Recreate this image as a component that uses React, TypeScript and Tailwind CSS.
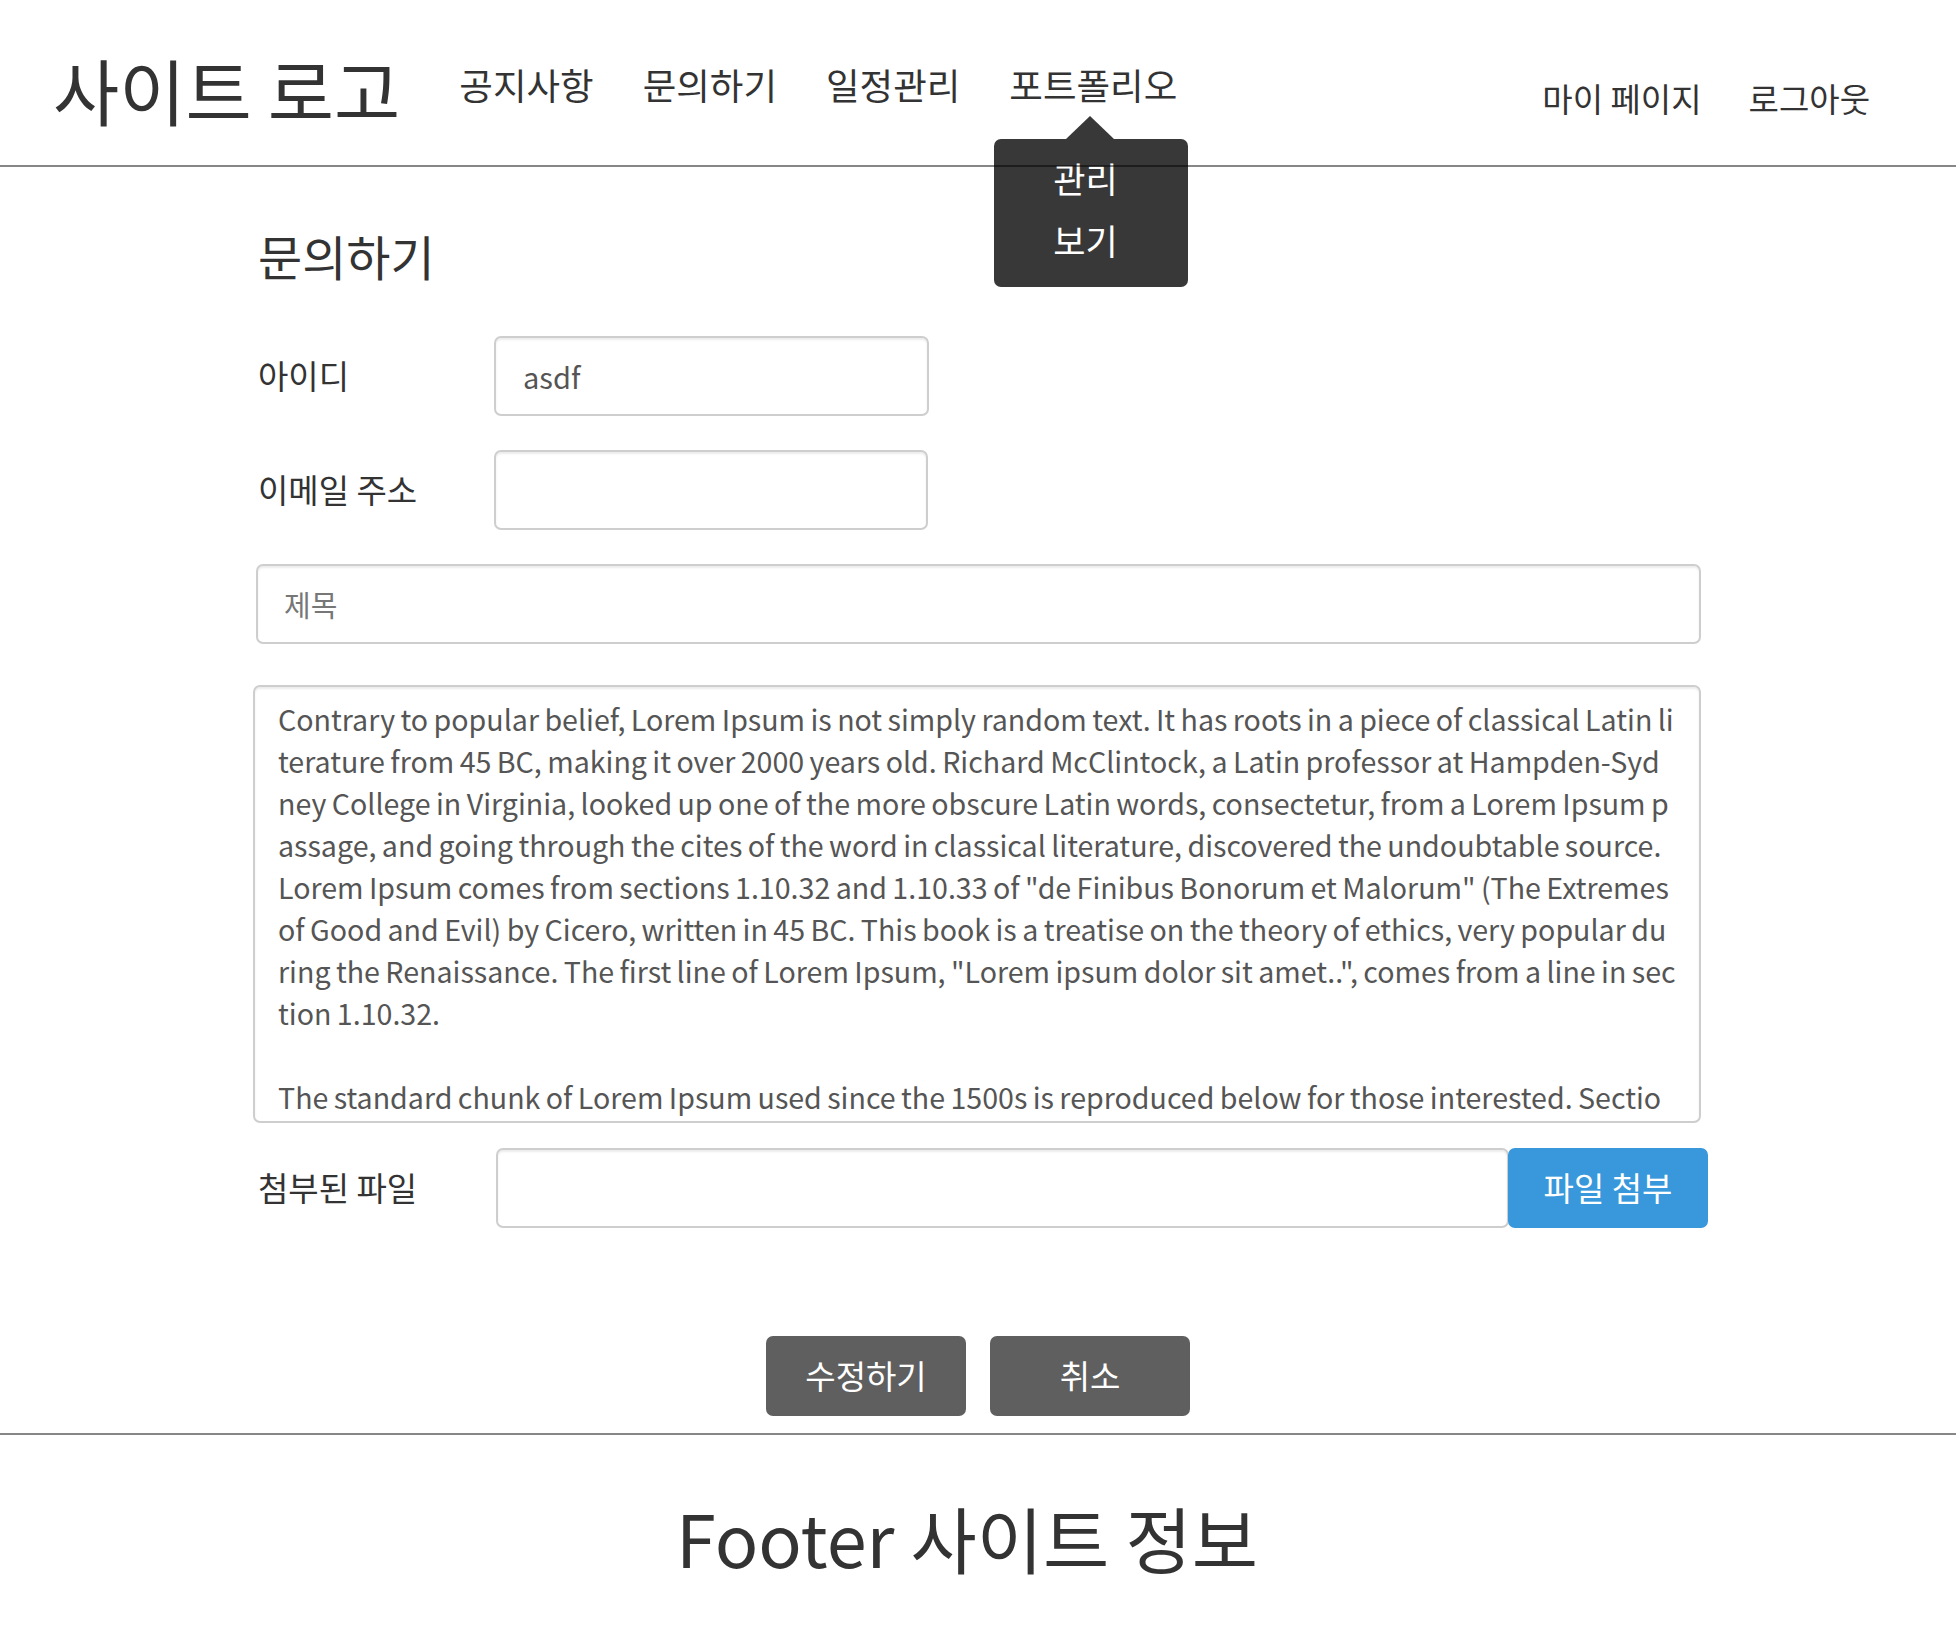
import React from "react";

const body =
  'Contrary to popular belief, Lorem Ipsum is not simply random text. It has roots in a piece of classical Latin literature from 45 BC, making it over 2000 years old. Richard McClintock, a Latin professor at Hampden-Sydney College in Virginia, looked up one of the more obscure Latin words, consectetur, from a Lorem Ipsum passage, and going through the cites of the word in classical literature, discovered the undoubtable source. Lorem Ipsum comes from sections 1.10.32 and 1.10.33 of "de Finibus Bonorum et Malorum" (The Extremes of Good and Evil) by Cicero, written in 45 BC. This book is a treatise on the theory of ethics, very popular during the Renaissance. The first line of Lorem Ipsum, "Lorem ipsum dolor sit amet..", comes from a line in section 1.10.32.\n\nThe standard chunk of Lorem Ipsum used since the 1500s is reproduced below for those interested. Sections 1.10.32 and 1.10.33 from "de Finibus Bonorum et Malorum" by Cicero are also reproduced in their exact original form, accompanied by English versions from the 1914 translation by H. Rackham.';

const menu = ["공지사항", "문의하기", "일정관리"];

function App() {
  return (
    <div className="min-h-[1652px] bg-white font-['Noto_Sans_CJK_KR',sans-serif] text-[#333]">
      <header className="flex h-[165px] items-start">
        <div className="ml-[53px] mt-[53px] text-[72px] leading-[72px]">사이트 로고</div>
        <nav className="ml-[59px] mt-[67px] flex gap-[49px] text-[36.5px] leading-[36px]">
          {menu.map((m) => (
            <a key={m} className="cursor-pointer">
              {m}
            </a>
          ))}
          <div className="relative">
            <a className="cursor-pointer">포트폴리오</a>
            <div className="absolute left-[-15px] top-[72px] h-[148px] w-[194px] rounded-[7px] bg-[#383838] pl-[59px] pt-[8px] text-[35px] leading-[62px] text-white">
              <div className="absolute left-[72px] top-[-23px] h-0 w-0 border-x-[24px] border-b-[23px] border-x-transparent border-b-[#383838]" />
              <div>관리</div>
              <div>보기</div>
            </div>
          </div>
        </nav>
        <div className="ml-auto mr-[86px] mt-[82px] flex gap-[47px] text-[33px] leading-[33px]">
          <a className="cursor-pointer">마이 페이지</a>
          <a className="cursor-pointer">로그아웃</a>
        </div>
      </header>
      <div className="relative z-10 h-[2px] bg-black/[0.47]" />

      <main className="ml-[253px] w-[1455px]">
        <h2 className="ml-[5px] mt-[64px] text-[48px] leading-[48px]">문의하기</h2>

        <div className="mt-[57px] flex items-center">
          <label className="w-[241px] pl-[5px] text-[33px]">아이디</label>
          <input
            className="h-[80px] w-[435px] rounded-[7px] border-2 border-[#cecece] px-[27px] text-[29px] text-[#555] shadow-[inset_0_2px_2px_rgba(0,0,0,0.075)] outline-none"
            defaultValue="asdf"
          />
        </div>
        <div className="mt-[34px] flex items-center">
          <label className="w-[241px] pl-[5px] text-[33px]">이메일 주소</label>
          <input className="h-[80px] w-[434px] rounded-[7px] border-2 border-[#cecece] px-[27px] text-[29px] text-[#555] shadow-[inset_0_2px_2px_rgba(0,0,0,0.075)] outline-none" />
        </div>

        <input
          className="ml-[3px] mt-[34px] block h-[80px] w-[1445px] rounded-[7px] border-2 border-[#cecece] px-[26px] text-[29px] text-[#555] shadow-[inset_0_2px_2px_rgba(0,0,0,0.075)] outline-none placeholder:text-[#777]"
          placeholder="제목"
        />

        <textarea
          className="mt-[41px] block h-[438px] w-[1448px] resize-none overflow-hidden break-all rounded-[7px] border-2 border-[#cecece] pl-[23px] pr-[23px] pt-[11px] text-[28.6px] leading-[42px] text-[#555] [word-spacing:-1px] shadow-[inset_0_2px_2px_rgba(0,0,0,0.075)] outline-none"
          defaultValue={body}
          readOnly
        />

        <div className="mt-[25px] flex items-center">
          <label className="w-[243px] pl-[5px] text-[33px]">첨부된 파일</label>
          <input className="h-[80px] flex-1 rounded-[7px] border-2 border-[#cecece] px-[26px] text-[29px] shadow-[inset_0_2px_2px_rgba(0,0,0,0.075)] outline-none" readOnly />
          <button className="-ml-px h-[80px] w-[200px] rounded-[7px] bg-[#3898db] text-[33px] text-white">
            파일 첨부
          </button>
        </div>

        <div className="mt-[108px] flex justify-center gap-[24px] pr-[5px]">
          <button className="h-[80px] w-[200px] rounded-[7px] bg-[#5f5f5f] text-[33px] text-white">수정하기</button>
          <button className="h-[80px] w-[200px] rounded-[7px] bg-[#5f5f5f] text-[33px] text-white">취소</button>
        </div>
      </main>

      <footer className="mt-[17px] border-t-2 border-[#878787]">
        <div className="flex h-[217px] items-center justify-center pb-[13px] pr-[22px] text-[72px] leading-[72px]">
          Footer 사이트 정보
        </div>
      </footer>
    </div>
  );
}

export default App;
